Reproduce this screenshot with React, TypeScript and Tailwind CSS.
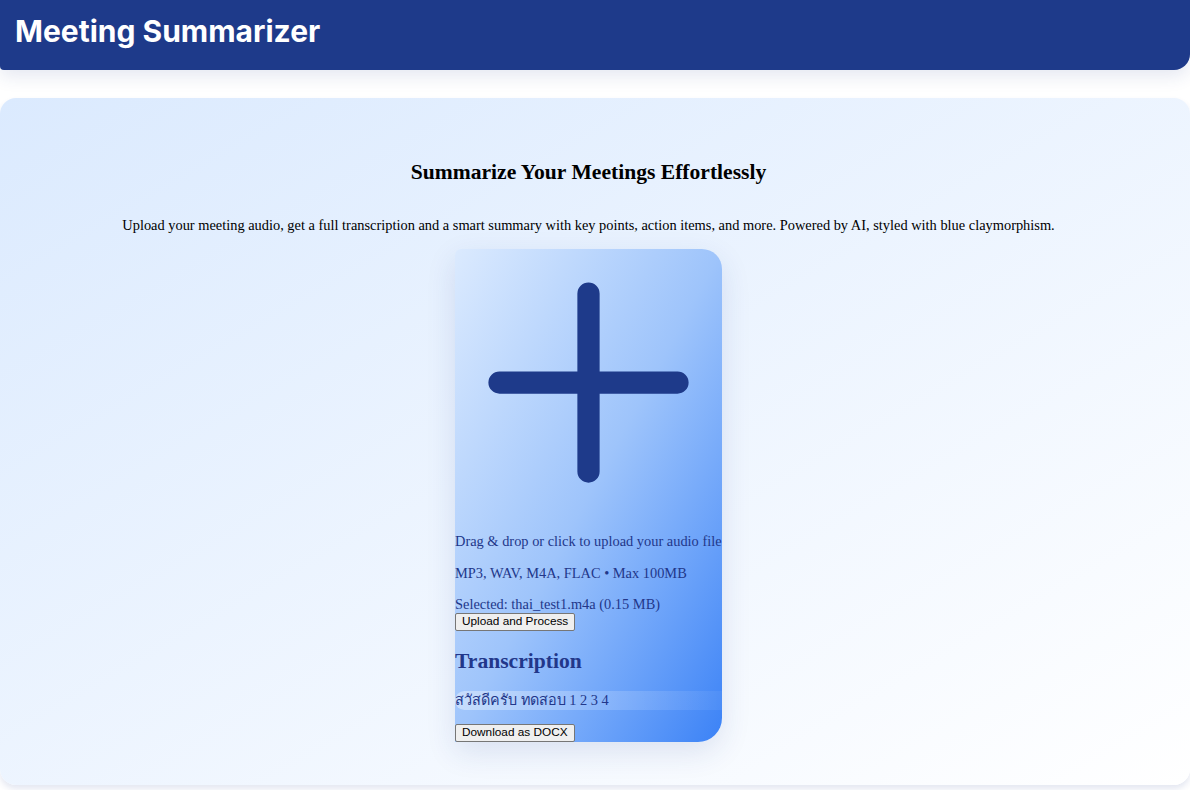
import React from 'react';

const serif = "font-['Liberation_Serif','Times_New_Roman',serif]";
const btn =
  "block bg-[#efefef] border border-[#767676] rounded-[2px] px-1.5 h-[18px] text-[11.8px] leading-none text-black font-['Liberation_Sans',Arial,sans-serif]";

export default function App() {
  return (
    <div className="min-h-[790px] bg-white">
      <header className="h-[70px] bg-[#1e3a8a] rounded-br-2xl rounded-bl-sm shadow-[0_6px_18px_rgba(30,58,138,0.12)] flex items-center px-[15px]">
        <h1 className="text-[30px] font-bold text-white font-['Inter',sans-serif] leading-none -mt-[8px]">
          Meeting Summarizer
        </h1>
      </header>

      <main className="mt-[28px] mb-[4px] rounded-2xl bg-gradient-to-br from-[#dbeafe] to-white shadow-[0_4px_6px_rgba(30,58,138,0.12)] pt-[62px] pb-[43px] pl-4 pr-[29px] flex flex-col items-center text-black">
        <h2 className={`${serif} text-[21.6px] font-bold leading-[24px]`}>
          Summarize Your Meetings Effortlessly
        </h2>
        <p className={`${serif} text-[14.4px] leading-[17px] mt-[33px] mb-[15px]`}>
          Upload your meeting audio, get a full transcription and a smart summary with key points, action items, and more. Powered by AI, styled with blue claymorphism.
        </p>

        <div
          className={`${serif} w-[267px] bg-gradient-to-br from-[#dbeafe] via-[#9ec4fb] to-[#3b82f6] rounded-tl-md rounded-tr-[20px] rounded-br-[24px] shadow-[0_10px_30px_rgba(30,58,138,0.12)] text-[#22378a] text-[14.4px] leading-[17px]`}
        >
          <svg viewBox="0 0 24 24" width={267} height={267} className="block" fill="none" stroke="#1e3a8a" strokeWidth={2} strokeLinecap="round">
            <path d="M12 4v16M4 12h16" />
          </svg>
          <p className="mt-[17px] whitespace-nowrap">Drag &amp; drop or click to upload your audio file</p>
          <p className="mt-[15px]">MP3, WAV, M4A, FLAC • Max 100MB</p>
          <p className="mt-[14px]">Selected: thai_test1.m4a (0.15 MB)</p>
          <button className={btn}>Upload and Process</button>
          <h2 className="text-[21.6px] font-bold leading-[24px] mt-[18px]">Transcription</h2>
          <div className="mt-[18px] h-[19px] rounded-l-[10px] bg-gradient-to-r from-white/40 via-white/20 to-white/5 font-['Liberation_Serif','Noto_Sans',serif] leading-[19px]">
            สวัสดีครับ ทดสอบ 1 2 3 4
          </div>
          <button className={`${btn} mt-[14px]`}>Download as DOCX</button>
        </div>
      </main>
    </div>
  );
}
